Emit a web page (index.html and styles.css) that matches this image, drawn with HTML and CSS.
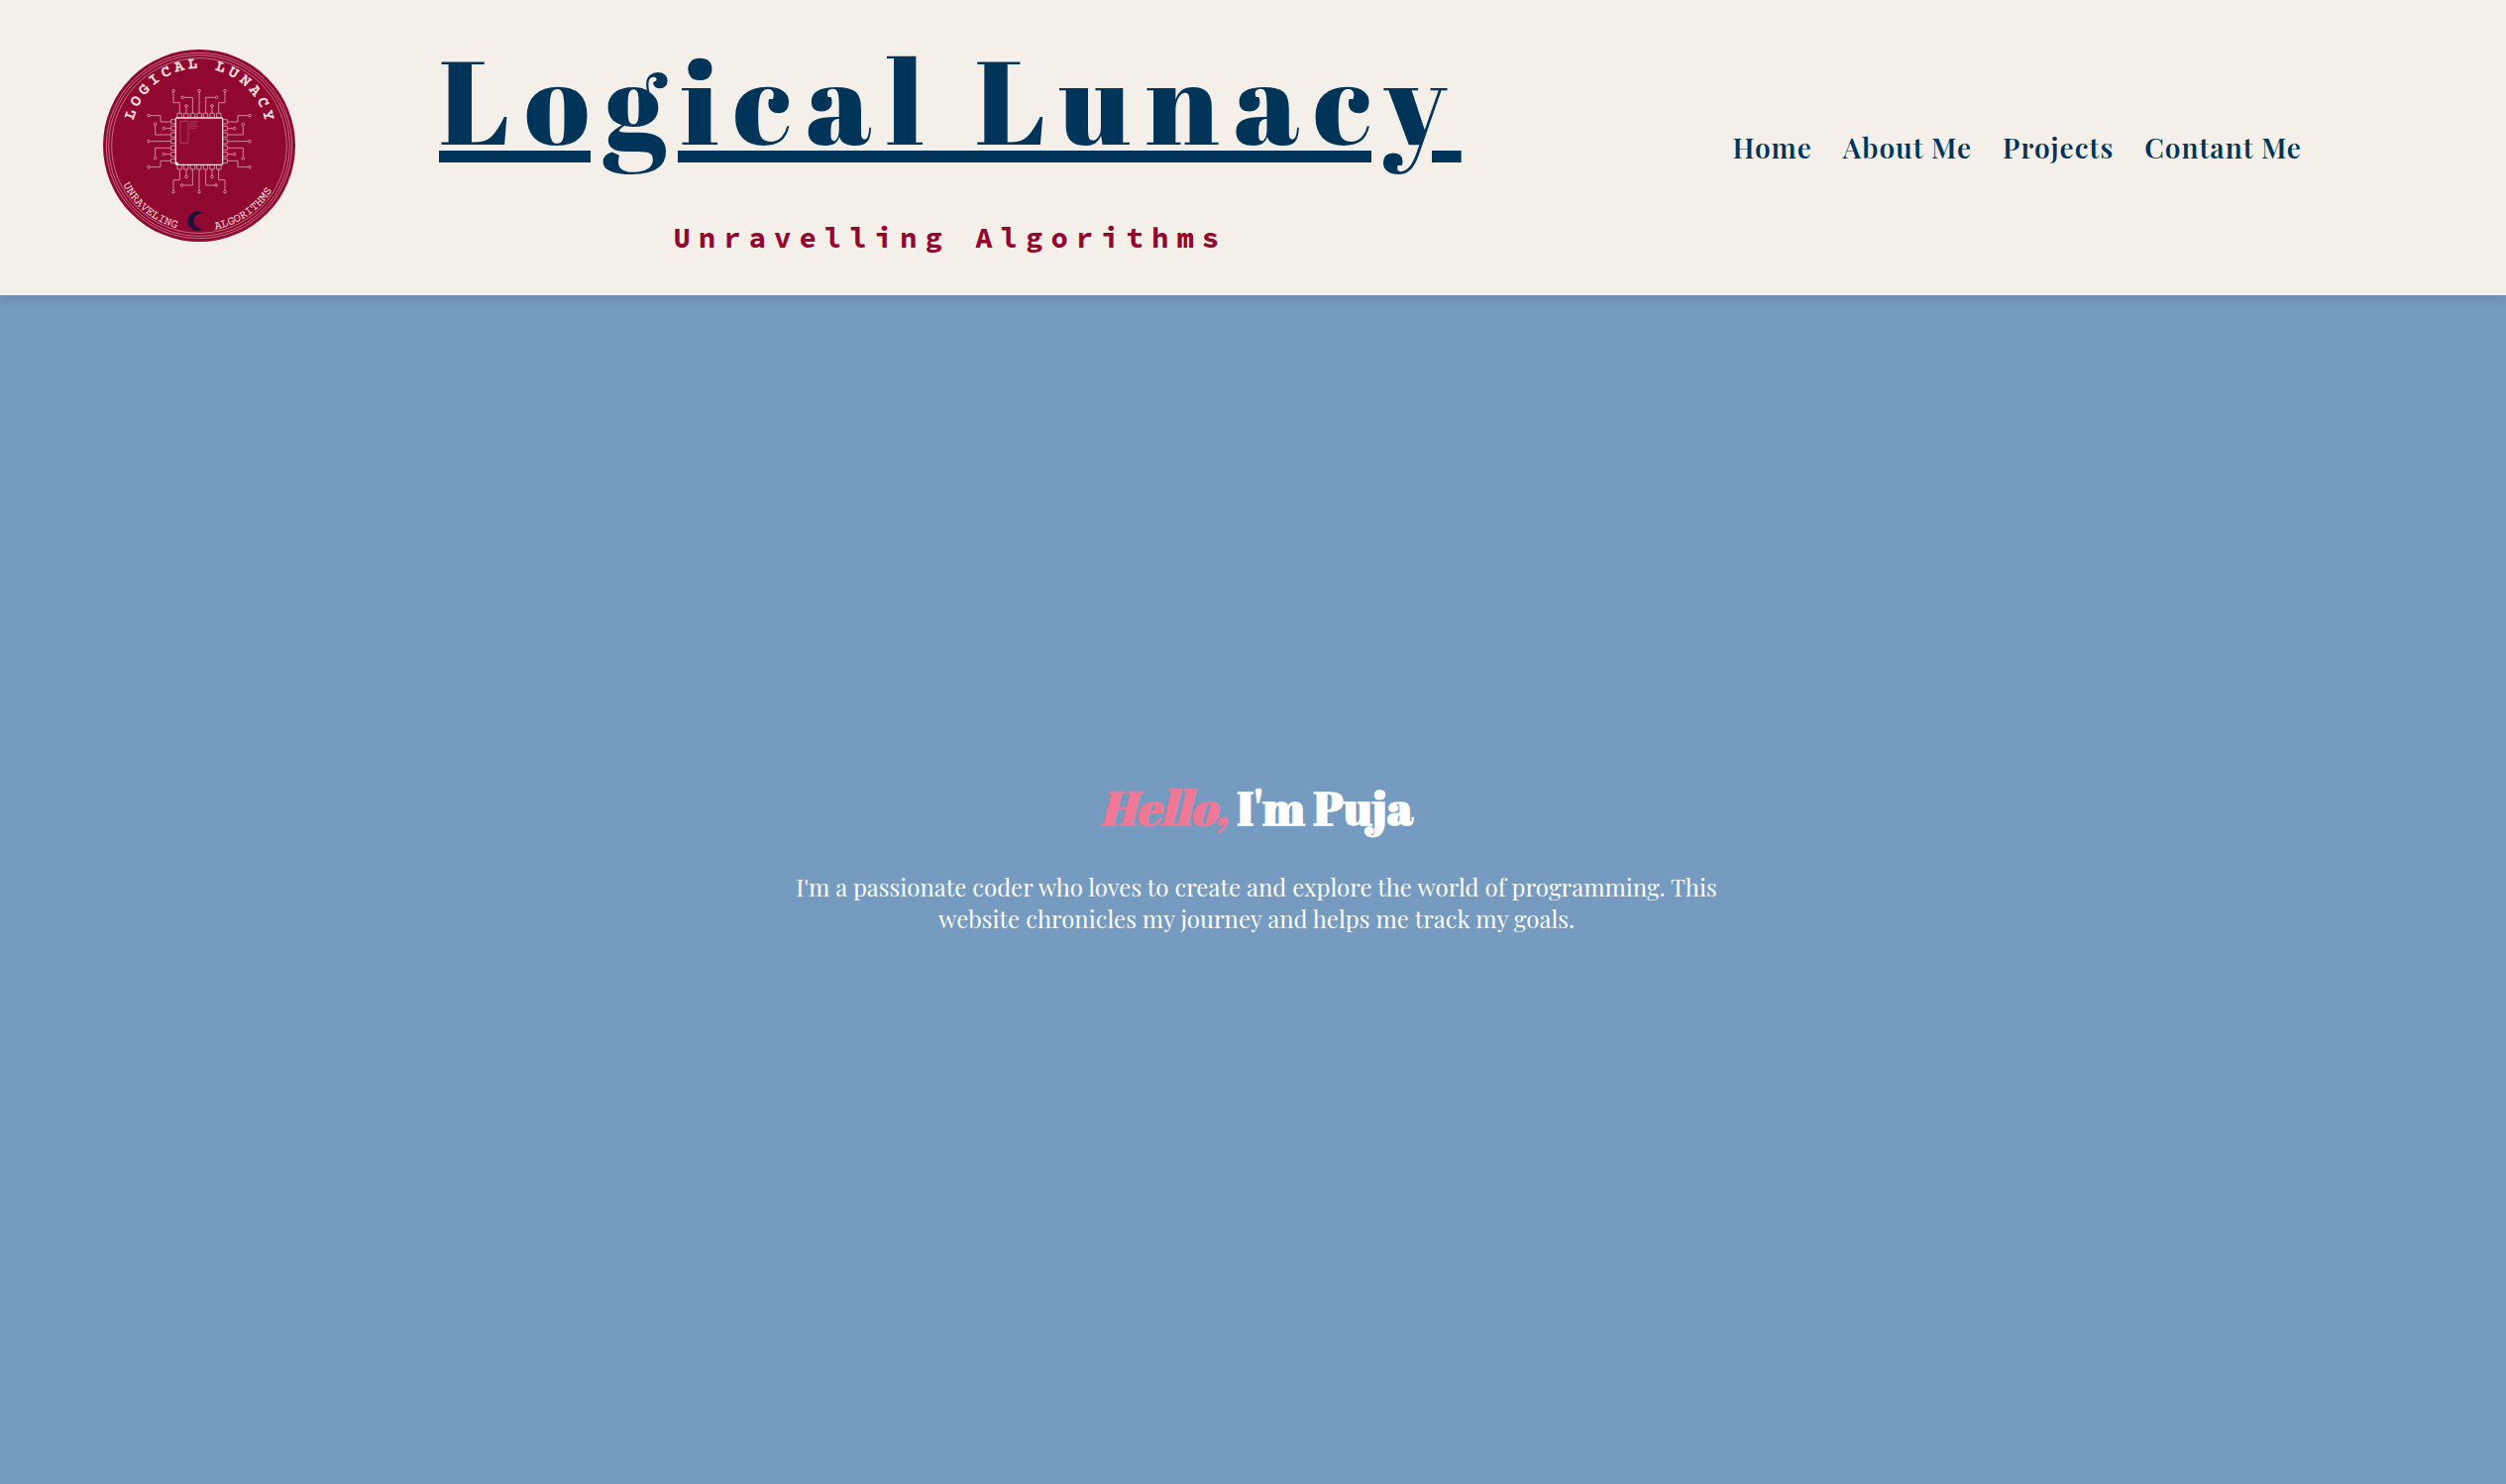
FILE: index.html
```html
<!DOCTYPE html>
<html lang="en">
<head>
<meta charset="utf-8">
<title>Logical Lunacy</title>
<meta name="viewport" content="width=device-width, initial-scale=1">
<link rel="stylesheet" href="styles.css">
</head>
<body>
<header class="site-header">
  <svg class="logo" viewBox="40 42 582 582" role="img" aria-label="Logical Lunacy">
    <defs>
      <path id="arc-top" d="M127 303a204 204 0 0 1 408 0"/>
      <path id="arc-left" d="M100 451A259 259 0 0 0 331 592"/>
      <path id="arc-right" d="M380 587A259 259 0 0 0 590 333"/>
      <g id="pins">
        <path d="M253 171v32h19v32M284 187h27v48M292 217v18M331 171v64M378 187h-27v48M370 217v18M409 171v32h-19v32"/>
        <path class="pads" d="M265 249v-14h13v14M285 249v-14h13v14M305 249v-14h13v14M325 249v-14h13v14M344 249v-14h13v14M364 249v-14h13v14M384 249v-14h13v14"/>
        <g class="dots">
          <circle cx="253" cy="167" r="4"/><circle cx="280" cy="187" r="4"/><circle cx="292" cy="213" r="4"/><circle cx="331" cy="167" r="4"/><circle cx="383" cy="187" r="4"/><circle cx="370" cy="213" r="4"/><circle cx="409" cy="167" r="4"/>
        </g>
      </g>
    </defs>
    <circle class="disc" cx="331" cy="333" r="291"/>
    <g class="rings">
      <circle cx="331" cy="333" r="281"/>
      <circle cx="331" cy="333" r="274"/>
      <circle cx="331" cy="333" r="265"/>
    </g>
    <g class="circuit">
      <use href="#pins"/>
      <use href="#pins" transform="rotate(90 331 320)"/>
      <use href="#pins" transform="rotate(180 331 320)"/>
      <use href="#pins" transform="rotate(270 331 320)"/>
      <path class="die" d="M274 259h24v66h-24zM302 260h24M302 267h22M302 274h24M302 280h20"/>
    </g>
    <rect class="chip" x="260" y="249" width="142" height="142" rx="3"/>
    <circle class="mark" cx="264" cy="387" r="4"/>
    <path class="moon" d="M343 538a29 29 0 1 0 0 47a24 24 0 1 1 0-47z"/>
    <text class="arc arc-large"><textPath href="#arc-top" startOffset="51%" text-anchor="middle">LOGICAL LUNACY</textPath></text>
    <text class="arc arc-small"><textPath href="#arc-left">UNRAVELING</textPath></text>
    <text class="arc arc-small"><textPath href="#arc-right">ALGORITHMS</textPath></text>
  </svg>
  <div class="brand">
    <h1 class="title">Logical Lunacy</h1>
    <p class="tagline">Unravelling Algorithms</p>
  </div>
  <nav class="nav">
    <a href="#home">Home</a>
    <a href="#about">About Me</a>
    <a href="#projects">Projects</a>
    <a href="#contact">Contant Me</a>
  </nav>
</header>
<main class="hero" id="home">
  <h2 class="greeting"><em>Hello,</em> I'm Puja</h2>
  <p class="intro">I'm a passionate coder who loves to create and explore the world of programming. This website chronicles my journey and helps me track my goals.</p>
</main>
</body>
</html>
```
FILE: styles.css
```css
* { box-sizing: border-box; }

body {
  margin: 0;
  min-height: 100vh;
  display: flex;
  flex-direction: column;
  background: #769bc0;
  font-family: "Playfair Display", "Liberation Serif", serif;
}

.site-header {
  display: flex;
  align-items: center;
  padding: 20px 206px 20px 104px;
  background: #f5efe9;
  color: #003459;
  box-shadow: 0 4px 12px rgba(0, 0, 0, 0.12);
}

.logo { width: 194px; height: 194px; flex: none; margin-bottom: 4px; }
.disc { fill: #90072f; }
.rings { fill: none; stroke: #d9a3ae; stroke-width: 2; }
.circuit { fill: none; stroke: #cf8a9d; stroke-width: 3; }
.circuit .pads, .circuit .die { stroke: #b75a74; stroke-width: 2; }
.circuit .dots { stroke: #f0d5da; }
.chip { fill: none; stroke: #f3dfe2; stroke-width: 4; }
.mark { fill: #fff; }
.moon { fill: #14143c; }
.arc { fill: #f0dcd8; font-family: "Courier Prime", "DejaVu Serif", serif; }
.arc-large { font-size: 50px; font-weight: 700; letter-spacing: 10px; }
.arc-small { font-size: 36px; letter-spacing: 0; }

.brand { margin-left: 145px; padding-bottom: 20px; text-align: center; }

.title {
  margin: 0;
  font-family: "Abril Fatface", "Liberation Serif", serif;
  font-size: 120px;
  line-height: 160px;
  font-weight: 400;
  letter-spacing: 15px;
  text-decoration: underline;
  text-decoration-thickness: 12px;
  text-underline-offset: 6px;
  white-space: nowrap;
}

.tagline {
  margin: 42px 0 0;
  color: #95062e;
  font-family: "Source Code Pro", "Liberation Mono", monospace;
  font-size: 29px;
  line-height: 36px;
  font-weight: 700;
  letter-spacing: 8px;
}

.nav { display: flex; gap: 31px; margin-left: auto; }
.nav a {
  color: inherit;
  font-size: 28px;
  line-height: 36px;
  font-weight: 600;
  letter-spacing: 1px;
  text-decoration: none;
  white-space: nowrap;
}

.hero {
  flex: 1;
  display: flex;
  flex-direction: column;
  align-items: center;
  justify-content: center;
  padding: 0 0 70px 7px;
  color: #fff;
  text-align: center;
}

.greeting {
  margin: 0 0 32px;
  font-family: "Abril Fatface", "Liberation Serif", serif;
  font-size: 48px;
  line-height: 64px;
}
.greeting em { color: #ef7896; }

.intro {
  max-width: 960px;
  margin: 0;
  font-size: 24px;
  line-height: 32px;
}
```
